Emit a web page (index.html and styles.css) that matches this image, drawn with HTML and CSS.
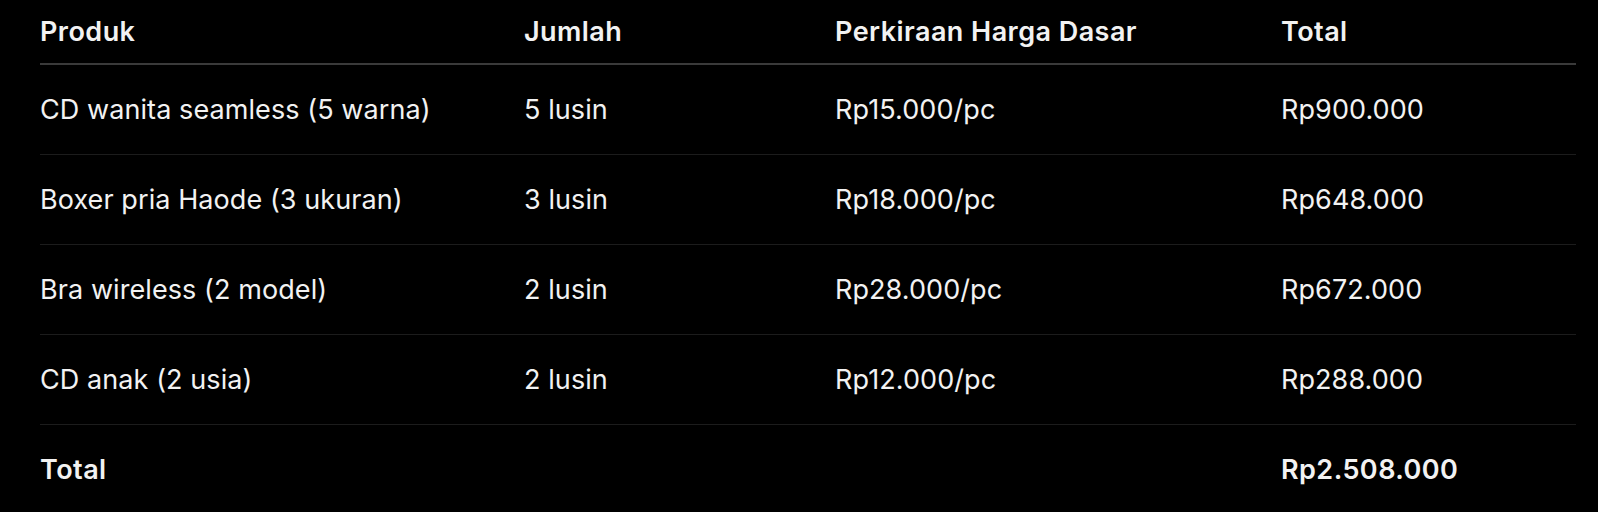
FILE: index.html
```html
<!DOCTYPE html>
<html lang="id">
<head>
<meta charset="utf-8">
<title>Tabel</title>
<link rel="stylesheet" href="styles.css">
</head>
<body>
<div class="wrap">
  <table class="tbl">
    <colgroup>
      <col class="c1"><col class="c2"><col class="c3"><col class="c4">
    </colgroup>
    <thead>
      <tr><th>Produk</th><th>Jumlah</th><th>Perkiraan Harga Dasar</th><th>Total</th></tr>
    </thead>
    <tbody>
      <tr><td>CD wanita seamless (5 warna)</td><td>5 lusin</td><td>Rp15.000/pc</td><td>Rp900.000</td></tr>
      <tr><td>Boxer pria Haode (3 ukuran)</td><td>3 lusin</td><td>Rp18.000/pc</td><td>Rp648.000</td></tr>
      <tr><td>Bra wireless (2 model)</td><td>2 lusin</td><td>Rp28.000/pc</td><td>Rp672.000</td></tr>
      <tr><td>CD anak (2 usia)</td><td>2 lusin</td><td>Rp12.000/pc</td><td>Rp288.000</td></tr>
      <tr class="sum"><td>Total</td><td></td><td></td><td>Rp2.508.000</td></tr>
    </tbody>
  </table>
</div>
</body>
</html>
```
FILE: styles.css
```css
html, body {
  margin: 0;
  padding: 0;
  background: #000;
}
.wrap {
  padding: 0 22px 0 40px;
}
.tbl {
  width: 100%;
  border-collapse: collapse;
  table-layout: fixed;
  font-family: Inter, "Noto Sans", sans-serif;
  font-size: 27px;
  color: #f2f2f2;
}
.c1 { width: 484px; }
.c2 { width: 311px; }
.c3 { width: 446px; }
.c4 { width: auto; }
.tbl th {
  text-align: left;
  font-weight: 600;
  letter-spacing: 0.45px;
  height: 63px;
  padding: 0;
  border-bottom: 2px solid #3a3a3a;
  vertical-align: middle;
}
.tbl td {
  padding: 0;
  height: 89px;
  border-bottom: 1px solid #1c1c1c;
  vertical-align: middle;
  font-weight: 400;
  letter-spacing: 0.08px;
}
.tbl tr.sum td {
  font-weight: 600;
  letter-spacing: 0.45px;
  border-bottom: none;
}
```
